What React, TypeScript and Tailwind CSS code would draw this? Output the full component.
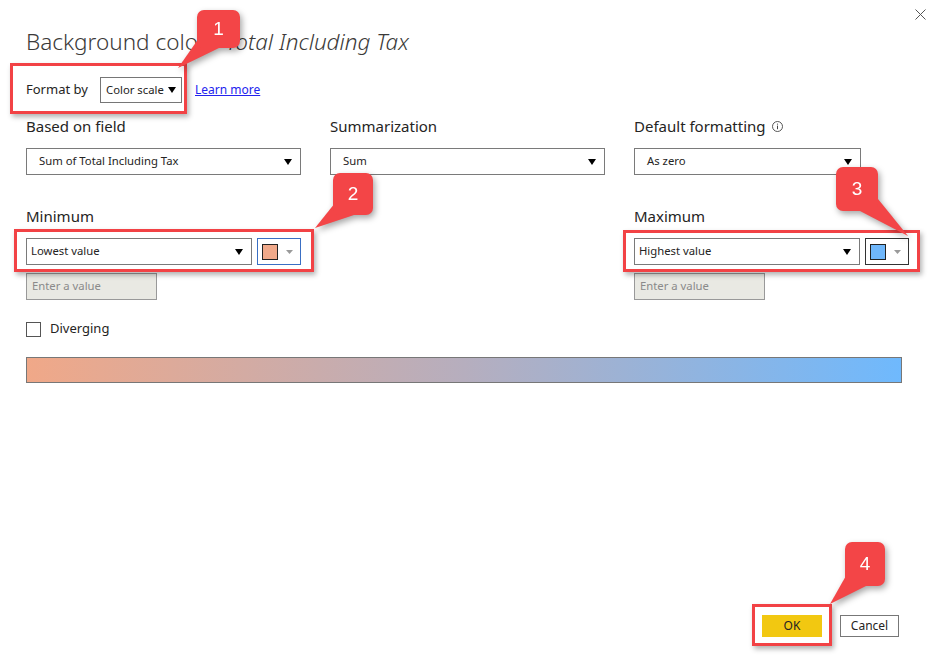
import React from 'react'

/**
 * Conditional formatting dialog: Background color by color scale
 * Red numbered callouts are annotation overlays
 */

const font = { fontFamily: '"Segoe UI", "Noto Sans", sans-serif' }

function Caret({ className = '' }: { className?: string }) {
  return (
    <svg width="8" height="6" viewBox="0 0 8 6" className={className}>
      <path d="M0 0h8L4 6z" fill="currentColor" />
    </svg>
  )
}

function Select({ label, width, pad = 'pl-[12px]' }: { label: string; width: string; pad?: string }) {
  return (
    <div
      className={`${width} h-[27px] border border-[#7a7a7a] bg-white flex items-center ${pad} pr-[8px] text-[11.3px] text-[#252423]`}
    >
      <span className="flex-1 whitespace-nowrap">{label}</span>
      <Caret className="text-black" />
    </div>
  )
}

function ColorButton({ color, focused }: { color: string; focused?: boolean }) {
  return (
    <div
      className={`w-[44px] h-[27px] flex items-center pl-[4px] gap-[8px] bg-white border ${
        focused ? 'border-[#3a6fc4]' : 'border-[#333]'
      }`}
    >
      <div className="w-[16px] h-[16px] border border-[#222]" style={{ background: color }} />
      <svg width="7" height="4" viewBox="0 0 7 4">
        <path d="M0 0h7L3.5 4z" fill="#9a9a9a" />
      </svg>
    </div>
  )
}

function EnterValue() {
  return (
    <div className="w-[131px] h-[27px] mt-[8px] border border-[#999] bg-[#e9e9e3] flex items-center pl-[5px] text-[11.3px] text-[#8a8a8a]">
      Enter a value
    </div>
  )
}

interface CalloutProps {
  n: string
  left: number
  top: number
  w: number
  h: number
  rect: [number, number, number, number]
  tail: string
}

function Callout({ n, left, top, w, h, rect, tail }: CalloutProps) {
  const [rx, ry, rw, rh] = rect
  return (
    <div
      className="absolute drop-shadow-[2px_3px_3px_rgba(0,0,0,0.35)]"
      style={{ left, top, width: w, height: h }}
    >
      <svg width={w} height={h} className="absolute inset-0">
        <polygon points={tail} fill="#f34547" />
        <rect x={rx} y={ry} width={rw} height={rh} rx="7" fill="#f34547" />
      </svg>
      <span
        className="absolute flex items-center justify-center text-white text-[19px]"
        style={{ left: rx, top: ry, width: rw, height: rh, fontFamily: '"Liberation Sans", Arial, sans-serif' }}
      >
        {n}
      </span>
    </div>
  )
}

function RedBox({ className }: { className: string }) {
  return (
    <div
      className={`absolute border-[3px] border-[#f24245] shadow-[2px_3px_5px_rgba(0,0,0,0.3)] ${className}`}
    />
  )
}

export default function App() {
  return (
    <div className="relative w-[938px] h-[664px] bg-white overflow-hidden text-[#252423]" style={font}>
      <button className="absolute right-[11px] top-[8px] p-[1px] text-[#555]">
        <svg width="11" height="11" viewBox="0 0 11 11">
          <path d="M0.5 0.5l10 10M10.5 0.5l-10 10" stroke="currentColor" strokeWidth="1" />
        </svg>
      </button>

      <div className="flex flex-col h-full pl-[26px] pt-[28px]">
        <h1 className="text-[22.5px] leading-[28px] font-light text-[#3b3a39] whitespace-nowrap">
          Background color - <i>Total Including Tax</i>
        </h1>

        <div className="mt-[21px] h-[26px] flex items-center">
          <span className="text-[13px] w-[74px]">Format by</span>
          <div className="w-[82px] h-[26px] border border-[#767676] flex items-center pl-[5px] pr-[5px] text-[11.3px]">
            <span className="flex-1 whitespace-nowrap">Color scale</span>
            <Caret className="text-black" />
          </div>
          <a className="ml-[13px] text-[12px] text-[#2323ee] underline">Learn more</a>
        </div>

        <div className="mt-[13px] grid grid-cols-[275px_275px_275px] gap-x-[29px]">
          <div>
            <div className="text-[15px] leading-[20px]">Based on field</div>
            <div className="mt-[12px]">
              <Select label="Sum of Total Including Tax" width="w-[275px]" />
            </div>
          </div>
          <div>
            <div className="text-[15px] leading-[20px]">Summarization</div>
            <div className="mt-[12px]">
              <Select label="Sum" width="w-[275px]" />
            </div>
          </div>
          <div>
            <div className="text-[15px] leading-[20px] flex items-center gap-[6px]">
              Default formatting
              <svg width="11" height="11" viewBox="0 0 11 11">
                <circle cx="5.5" cy="5.5" r="5" fill="none" stroke="#444" strokeWidth="0.9" />
                <path d="M5.5 4.6v3.6" stroke="#444" strokeWidth="1" />
                <circle cx="5.5" cy="3.1" r="0.6" fill="#444" />
              </svg>
            </div>
            <div className="mt-[12px]">
              <Select label="As zero" width="w-[227px]" />
            </div>
          </div>

          <div className="mt-[31px]">
            <div className="text-[15px] leading-[20px]">Minimum</div>
            <div className="mt-[12px] flex gap-[5px]">
              <Select label="Lowest value" width="w-[227px]" pad="pl-[4px]" />
              <ColorButton color="#f0a98a" focused />
            </div>
            <EnterValue />
          </div>
          <div />
          <div className="mt-[31px]">
            <div className="text-[15px] leading-[20px]">Maximum</div>
            <div className="mt-[12px] flex gap-[5px]">
              <Select label="Highest value" width="w-[227px]" pad="pl-[4px]" />
              <ColorButton color="#6fb7fb" />
            </div>
            <EnterValue />
          </div>
        </div>

        <label className="mt-[21px] flex items-center gap-[9px] text-[13px] h-[16px]">
          <span className="w-[15px] h-[15px] border border-[#555] bg-white" />
          Diverging
        </label>

        <div className="mt-[20px] w-[876px] h-[26px] border border-[#777] bg-[linear-gradient(to_right,#f0a888,#b6aebe_50%,#6fb9fd)]" />

        <div className="mt-auto mb-[27px] mr-[39px] flex justify-end gap-[18px]">
          <button className="w-[60px] h-[22px] bg-[#f2c811] text-[12px] text-[#252423]">OK</button>
          <button className="w-[59px] h-[22px] border border-[#777] bg-white text-[12px] text-[#252423]">
            Cancel
          </button>
        </div>
      </div>

      <RedBox className="left-[10px] top-[63px] w-[177px] h-[51px]" />
      <RedBox className="left-[14px] top-[229px] w-[300px] h-[43px]" />
      <RedBox className="left-[623px] top-[230px] w-[297px] h-[42px]" />
      <RedBox className="left-[752px] top-[604px] w-[80px] h-[42px]" />

      <Callout n="1" left={175} top={8} w={70} h={64} rect={[22, 2, 43, 38]} tail="24,30 44,40 3,60" />
      <Callout n="2" left={310} top={170} w={68} h={62} rect={[23, 3, 40, 42]} tail="25,33 44,45 5,58" />
      <Callout n="3" left={832} top={164} w={80} h={76} rect={[4, 3, 42, 44]} tail="28,47 46,35 76,72" />
      <Callout n="4" left={826} top={540} w={60} h={68} rect={[19, 2, 40, 44]} tail="21,34 40,46 4,64" />
    </div>
  )
}
